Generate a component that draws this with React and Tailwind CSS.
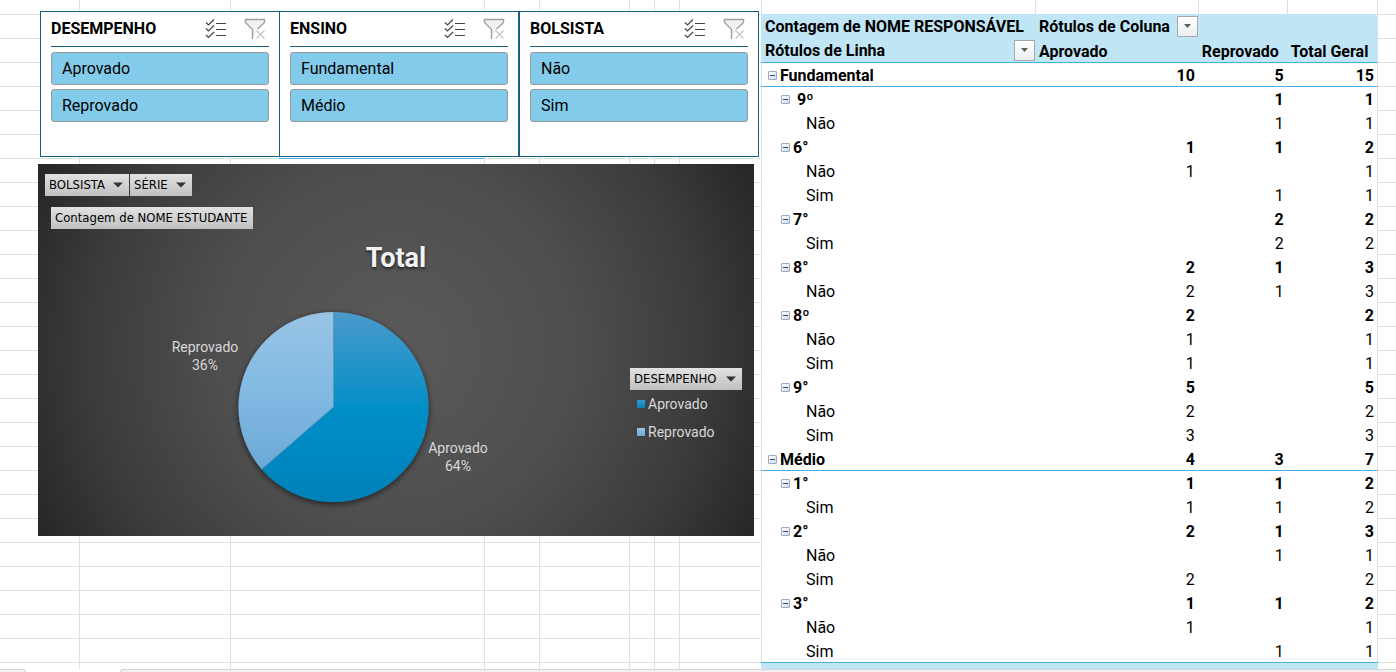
const SLICERS = [
  { title: "DESEMPENHO", items: ["Aprovado", "Reprovado"] },
  { title: "ENSINO", items: ["Fundamental", "Médio"] },
  { title: "BOLSISTA", items: ["Não", "Sim"] },
];

const ROWS = [
  { level: 0, label: "Fundamental", values: [10, 5, 15] },
  { level: 1, label: "\u00a09º", values: ["", 1, 1], rule: true },
  { level: 2, label: "Não", values: ["", 1, 1] },
  { level: 1, label: "6°", values: [1, 1, 2] },
  { level: 2, label: "Não", values: [1, "", 1] },
  { level: 2, label: "Sim", values: ["", 1, 1] },
  { level: 1, label: "7°", values: ["", 2, 2] },
  { level: 2, label: "Sim", values: ["", 2, 2] },
  { level: 1, label: "8°", values: [2, 1, 3] },
  { level: 2, label: "Não", values: [2, 1, 3] },
  { level: 1, label: "8º", values: [2, "", 2] },
  { level: 2, label: "Não", values: [1, "", 1] },
  { level: 2, label: "Sim", values: [1, "", 1] },
  { level: 1, label: "9°", values: [5, "", 5] },
  { level: 2, label: "Não", values: [2, "", 2] },
  { level: 2, label: "Sim", values: [3, "", 3] },
  { level: 0, label: "Médio", values: [4, 3, 7] },
  { level: 1, label: "1°", values: [1, 1, 2], rule: true },
  { level: 2, label: "Sim", values: [1, 1, 2] },
  { level: 1, label: "2°", values: [2, 1, 3] },
  { level: 2, label: "Não", values: ["", 1, 1] },
  { level: 2, label: "Sim", values: [2, "", 2] },
  { level: 1, label: "3°", values: [1, 1, 2] },
  { level: 2, label: "Não", values: [1, "", 1] },
  { level: 2, label: "Sim", values: ["", 1, 1] },
];

const INDENT = ["pl-1.5", "pl-[19px]", "pl-11"];

function MultiSelectIcon() {
  return (
    <svg width="22" height="22" viewBox="0 0 22 22" fill="none" stroke="#444" strokeWidth="1.2">
      <path d="M1 4.5 3.5 7 9 1.5M1 10.5 3.5 13 9 7.5M1 17 3.5 19.5 9 14" />
      <path d="M11 5.5H21M11 11.5H21M11 17.5H21" />
    </svg>
  );
}

function ClearFilterIcon() {
  return (
    <svg width="22" height="22" viewBox="0 0 22 22" fill="none">
      <path d="M1.5 1.5H20.5V4.5L13 11.5V13L8.5 20V11.5L1.5 4.5Z" fill="#f2f2f2" />
      <path d="M8.5 21V11.5L1.5 4.5V1.5H20.5V4.5L13.5 11" stroke="#9f9f9f" strokeWidth="1.4" />
      <path d="M12.5 12.5 20.5 20.5M20.5 12.5 12.5 20.5" stroke="#c4c4c4" strokeWidth="1.2" />
    </svg>
  );
}

function Slicer({ title, items }) {
  return (
    <section className="h-[146px] w-60 border border-[#156082] bg-white px-2.5">
      <header className="flex h-[35px] items-center border-b border-[#156082]">
        <h2 className="text-base font-bold">{title}</h2>
        <div className="ml-auto flex gap-[17px] pr-[3px]">
          <button type="button" aria-label="Seleção múltipla">
            <MultiSelectIcon />
          </button>
          <button type="button" aria-label="Limpar filtro">
            <ClearFilterIcon />
          </button>
        </div>
      </header>
      <div className="flex flex-col gap-1 pt-[5px]">
        {items.map((item) => (
          <button
            key={item}
            type="button"
            className="h-[33px] rounded-[3px] border border-[#999] bg-[#83cbeb] px-2.5 pt-px text-left text-base"
          >
            {item}
          </button>
        ))}
      </div>
    </section>
  );
}

function FieldButton({ children, arrow }) {
  return (
    <button
      type="button"
      className="flex h-[22px] items-center gap-2 bg-linear-to-b from-[#e2e2e2] to-[#c0c0c0] pr-1.5 pl-1 font-['DejaVu_Sans_Condensed','DejaVu_Sans',sans-serif] text-[13px] whitespace-nowrap text-black"
    >
      {children}
      {arrow && (
        <svg className="ml-auto" width="10" height="6" viewBox="0 0 10 6">
          <path d="M0 0.5H10L5 5.5Z" fill="#333" />
        </svg>
      )}
    </button>
  );
}

function PieChart() {
  return (
    <svg width="480" height="230" viewBox="0 0 480 230" className="shrink-0" role="img" aria-label="Aprovado 64%, Reprovado 36%">
      <defs>
        <linearGradient id="aprovado" gradientUnits="userSpaceOnUse" x1="0" y1="17" x2="0" y2="207">
          <stop offset="0" stopColor="#4a9aca" />
          <stop offset="0.5" stopColor="#038fc8" />
          <stop offset="1" stopColor="#0081b8" />
        </linearGradient>
        <linearGradient id="reprovado" gradientUnits="userSpaceOnUse" x1="0" y1="17" x2="0" y2="174">
          <stop offset="0" stopColor="#99c4e5" />
          <stop offset="0.5" stopColor="#82bae3" />
          <stop offset="1" stopColor="#6ca9d6" />
        </linearGradient>
        <filter id="shade" x="-10%" y="-10%" width="120%" height="120%">
          <feDropShadow dx="0" dy="2" stdDeviation="3" floodColor="#000" floodOpacity="0.6" />
        </filter>
      </defs>
      <g filter="url(#shade)">
        <path d="M295.5 112V17A95 95 0 1 1 223.7 174.2Z" fill="url(#aprovado)" />
        <path d="M295.5 112L223.7 174.2A95 95 0 0 1 295.5 17Z" fill="url(#reprovado)" />
      </g>
      <path d="M295.5 17V112L223.7 174.2" fill="none" stroke="#5c96bb" strokeWidth="1" />
      <g fill="#d9d9d9" fontSize="14" textAnchor="middle">
        <text x="167" y="57">Reprovado</text>
        <text x="167" y="75">36%</text>
        <text x="420" y="158">Aprovado</text>
        <text x="420" y="176">64%</text>
      </g>
    </svg>
  );
}

function Legend() {
  return (
    <div className="w-28 pt-[73px]">
      <div className="grid">
        <FieldButton arrow>DESEMPENHO</FieldButton>
      </div>
      <ul className="pl-[7px] text-sm leading-7 text-[#d9d9d9]">
        <li className="flex items-center gap-[3px]">
          <span className="size-2 bg-linear-to-b from-[#2f9ccf] to-[#0081b8]" />
          Aprovado
        </li>
        <li className="flex items-center gap-[3px]">
          <span className="size-2 bg-linear-to-b from-[#99c4e5] to-[#6ca9d6]" />
          Reprovado
        </li>
      </ul>
    </div>
  );
}

function Chart() {
  return (
    <section className="flex h-[372px] flex-col bg-[radial-gradient(circle,#5a5a5a_0%,#4e4e4e_45%,#3c3c3c_75%,#262626_100%)] pt-2.5">
      <div className="flex gap-px pl-[7px]">
        <FieldButton arrow>BOLSISTA</FieldButton>
        <FieldButton arrow>SÉRIE</FieldButton>
      </div>
      <div className="flex pt-[11px] pl-[13px]">
        <FieldButton>Contagem de NOME ESTUDANTE</FieldButton>
      </div>
      <h1 className="pt-[9px] text-center text-[27px] leading-10 font-bold text-[#f2f2f2] [text-shadow:0_2px_3px_rgb(0_0_0/0.6)]">
        Total
      </h1>
      <div className="flex items-start justify-between pt-[17px] pr-3">
        <PieChart />
        <Legend />
      </div>
    </section>
  );
}

function DropButton({ label }) {
  return (
    <button
      type="button"
      aria-label={label}
      className="grid size-[21px] place-items-center border border-[#a5a8ad] bg-linear-to-b from-white to-[#eceef2]"
    >
      <svg width="7" height="4" viewBox="0 0 7 4">
        <path d="M0 0H7L3.5 4Z" fill="#5f5f5f" />
      </svg>
    </button>
  );
}

function Toggle({ label }) {
  return (
    <button
      type="button"
      aria-label={"Recolher " + label.trim()}
      className="grid size-[9px] place-items-center rounded-[1px] border border-[#9aa9c6] bg-linear-to-br from-white to-[#d5d9e2]"
    >
      <span className="h-px w-[5px] bg-[#2f4a86]" />
    </button>
  );
}

function PivotTable() {
  return (
    <table className="w-full table-fixed border-separate border-spacing-0 bg-white text-base leading-[21px]">
      <colgroup>
        <col className="w-[44.4%]" />
        <col className="w-[26.4%]" />
        <col className="w-[14.4%]" />
        <col className="w-[14.8%]" />
      </colgroup>
      <thead className="bg-[#c0e6f5] text-left font-bold whitespace-nowrap">
        <tr className="h-6">
          <th scope="col" className="p-0 pl-1">Contagem de NOME RESPONSÁVEL</th>
          <th scope="col" className="p-0 pl-1">
            <div className="flex items-center justify-between">
              Rótulos de Coluna
              <DropButton label="Filtrar colunas" />
            </div>
          </th>
          <td colSpan={2} />
        </tr>
        <tr className="h-6">
          <th scope="col" className="p-0 pl-1">
            <div className="flex items-center justify-between">
              Rótulos de Linha
              <DropButton label="Filtrar linhas" />
            </div>
          </th>
          <th scope="col" className="p-0 pt-0.5 pl-1">Aprovado</th>
          <th scope="col" className="p-0 pt-0.5 pl-1">Reprovado</th>
          <th scope="col" className="p-0 pt-0.5 pl-1">Total Geral</th>
        </tr>
      </thead>
      <tbody>
        {ROWS.map((row, i) => {
          const line = i === 0 || row.rule ? "border-t border-t-[#45b0e1]" : "border-t border-t-white";
          const weight = row.level < 2 ? "font-bold" : "font-normal";
          return (
            <tr key={i} className={"h-6 " + weight}>
              <th scope="row" className={"border-l border-l-[#e0e0e0] p-0 pt-0.5 text-left " + line + " " + weight}>
                <div className={"flex items-center gap-[3px] " + INDENT[row.level]}>
                  {row.level < 2 && <Toggle label={row.label} />}
                  {row.label}
                </div>
              </th>
              <td className={"p-0 pt-0.5 pr-[3px] text-right " + line}>{row.values[0]}</td>
              <td className={"p-0 pt-0.5 pr-[3px] text-right " + line}>{row.values[1]}</td>
              <td className={"border-r border-r-[#e0e0e0] p-0 pt-0.5 pr-[3px] text-right " + line}>{row.values[2]}</td>
            </tr>
          );
        })}
      </tbody>
      <tfoot>
        <tr className="h-[7px] bg-[#c0e6f5]">
          <td colSpan={4} className="border-t border-t-[#45b0e1] p-0" />
        </tr>
      </tfoot>
    </table>
  );
}

function GridColumns() {
  const line = "border-r border-[#e0e0e0]";
  return (
    <div aria-hidden="true" className="absolute inset-0 flex">
      <div className={"w-20 shrink-0 " + line} />
      <div className={"w-[151px] shrink-0 " + line} />
      <div className={"w-[254px] shrink-0 " + line} />
      <div className={"w-[55px] shrink-0 " + line} />
      <div className={"w-[90px] shrink-0 " + line} />
      <div className={"w-[25px] shrink-0 " + line} />
      <div className={"w-[25px] shrink-0 " + line} />
      <div className={"w-[82px] shrink-0 " + line} />
      <div className="mr-[18px] grid flex-1 grid-cols-[274fr_163fr_89fr_90fr]">
        <div className={line} />
        <div className={line} />
        <div className={line} />
        <div className={line} />
      </div>
    </div>
  );
}

export default function App() {
  return (
    <div className="flex min-h-screen flex-col bg-white font-[Roboto,'Liberation_Sans',sans-serif] text-black">
      <main className="relative flex-1 bg-[linear-gradient(to_bottom,#e0e0e0_1px,transparent_1px)] bg-size-[100%_24px] bg-position-[0_14px]">
        <GridColumns />
        <div className="relative flex items-start">
          <div className="w-[761px] shrink-0 pt-[11px] pr-[7px] pl-[38px]">
            <div className="flex pl-0.5">
              {SLICERS.map((slicer, i) => (
                <div key={slicer.title} className={i === 0 ? "-mr-px shrink-0" : "relative shrink-0"}>
                  <Slicer {...slicer} />
                </div>
              ))}
            </div>
            <div className="mt-px mb-[5px] ml-[241px] h-px w-[205px] bg-[#45b0e1]" />
            <Chart />
          </div>
          <div className="flex-1 pt-3.5 pr-[18px]">
            <PivotTable />
          </div>
        </div>
      </main>
      <footer className="flex h-[3px] gap-[94px] overflow-hidden">
        <div className="w-[26px] rounded-tr-[3px] border-t border-r border-[#d6d6d6] bg-[#f0f0f0]" />
        <div className="flex-1 rounded-tl-[3px] border-t border-l border-[#d6d6d6] bg-[#f0f0f0]" />
      </footer>
    </div>
  );
}
